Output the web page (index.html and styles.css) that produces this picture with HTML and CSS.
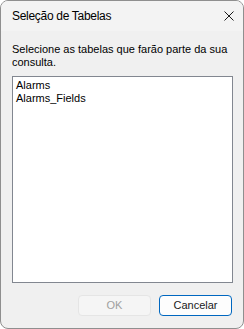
FILE: index.html
```html
<!DOCTYPE html>
<html lang="pt">
<head>
<meta charset="utf-8">
<title>Seleção de Tabelas</title>
<link rel="stylesheet" href="styles.css">
</head>
<body>
<div class="window">
  <div class="titlebar">
    <span class="title">Seleção de Tabelas</span>
    <span class="close">
      <svg width="10" height="10" viewBox="0 0 10 10"><path d="M0.5 0.5 L9.5 9.5 M9.5 0.5 L0.5 9.5" stroke="#1a1a1a" stroke-width="1" fill="none"/></svg>
    </span>
  </div>
  <div class="content">
    <p class="label">Selecione as tabelas que farão parte da sua consulta.</p>
    <div class="listbox">
      <div class="item">Alarms</div>
      <div class="item">Alarms_Fields</div>
    </div>
    <div class="footer">
      <button class="btn btn-disabled" disabled>OK</button>
      <button class="btn btn-default">Cancelar</button>
    </div>
  </div>
</div>
</body>
</html>
```
FILE: styles.css
```css
* { box-sizing: border-box; }
html, body { margin: 0; padding: 0; background: #ffffff; }
body {
  font-family: "Liberation Sans", Arial, sans-serif;
  font-size: 11px;
  color: #000;
}
.window {
  width: 244px;
  height: 329px;
  border: 1px solid #8f8f8f;
  border-radius: 8px;
  background: #f0f0f0;
  display: flex;
  flex-direction: column;
  overflow: hidden;
}
.titlebar {
  height: 30px;
  background: #f3f3f3;
  display: flex;
  align-items: center;
  justify-content: space-between;
  padding: 0 9px 0 11px;
}
.title { font-size: 12px; letter-spacing: -0.3px; color: #000; }
.close { display: flex; width: 10px; height: 10px; margin-top: -1px; }
.content {
  flex: 1;
  display: flex;
  flex-direction: column;
  padding: 12px 10px 0 11px;
}
.label {
  margin: 0;
  line-height: 13px;
}
.listbox {
  margin-top: 7px;
  height: 207px;
  background: #ffffff;
  border: 1px solid #828790;
  padding: 2px 3px;
}
.item { line-height: 13px; }
.footer {
  margin-top: 12px;
  display: flex;
  justify-content: flex-end;
  gap: 8px;
  padding-right: 1px;
}
.btn {
  width: 73px;
  height: 21px;
  font-family: inherit;
  font-size: 11px;
  border-radius: 4px;
  padding: 0;
  line-height: 19px;
}
.btn-disabled {
  background: #f5f5f5;
  border: 1px solid #e5e5e5;
  color: #a0a0a0;
}
.btn-default {
  background: #fdfdfd;
  border: 1px solid #0067c0;
  color: #1a1a1a;
}
```
